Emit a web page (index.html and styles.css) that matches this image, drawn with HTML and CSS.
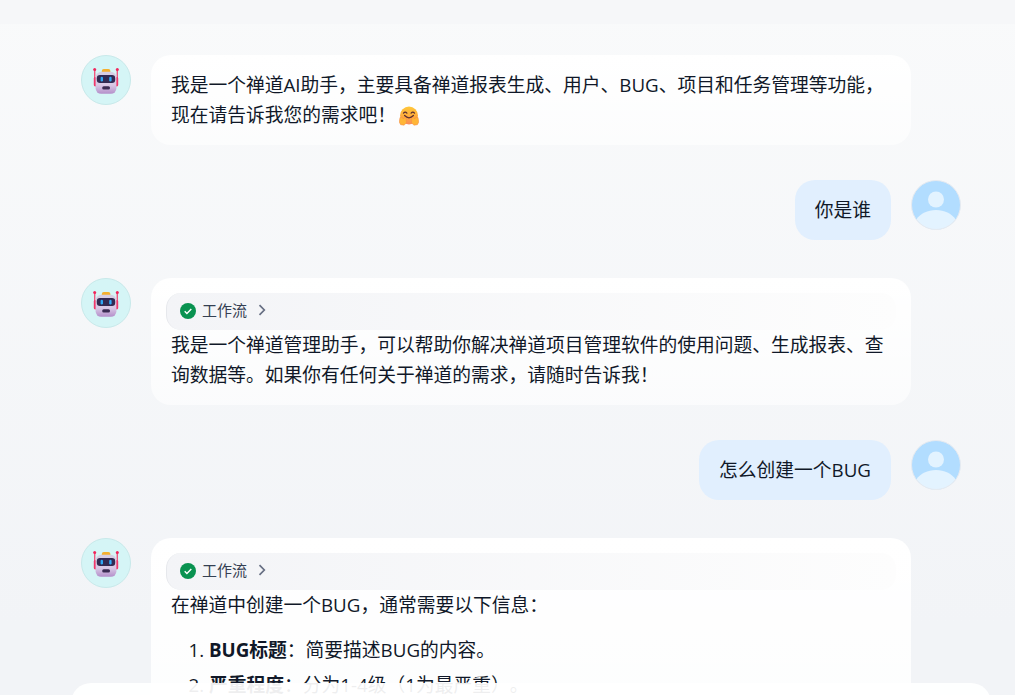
FILE: index.html
```html
<!DOCTYPE html>
<html lang="zh-CN">
<head>
    <meta charset="UTF-8">
    <meta name="viewport" content="width=device-width, initial-scale=1.0">
    <title>禅道AI助手</title>
    <link rel="stylesheet" href="styles.css">
</head>
<body>

    <!-- 公用图标 -->
    <svg class="sprite" width="0" height="0">
        <defs>
            <linearGradient id="face" x1="0" y1="0" x2="0" y2="1">
                <stop offset="0" stop-color="#d6cfe4"/>
                <stop offset="0.6" stop-color="#d9c9e6"/>
                <stop offset="1" stop-color="#b48fca"/>
            </linearGradient>
            <linearGradient id="hug" x1="0" y1="0" x2="0" y2="1">
                <stop offset="0" stop-color="#ffc83a"/>
                <stop offset="0.6" stop-color="#ffa83c"/>
                <stop offset="1" stop-color="#f98a5c"/>
            </linearGradient>
            <symbol id="robot" viewBox="0 0 28 28">
                <path d="M2.700 4v13M25.300 4v13" stroke="#f0577f" stroke-width="1.400"/>
                <circle cx="2.700" cy="3.400" r="1.500" fill="#f0265c"/>
                <circle cx="25.300" cy="3.400" r="1.500" fill="#f0265c"/>
                <rect x="1.800" y="11" width="3" height="9.500" rx="1.400" fill="#f0386b"/>
                <rect x="23.200" y="11" width="3" height="9.500" rx="1.400" fill="#f0386b"/>
                <rect x="9.800" y="3" width="8.600" height="5" rx="2" fill="#f5b02e"/>
                <rect x="3.600" y="5.800" width="20.800" height="22" rx="5.500" fill="url(#face)"/>
                <rect x="4.800" y="9" width="18.400" height="8" rx="3.200" fill="#322a52"/>
                <rect x="8.600" y="10.800" width="2.400" height="4.600" rx="1.200" fill="#2fa8f5"/>
                <rect x="17.200" y="10.800" width="2.400" height="4.600" rx="1.200" fill="#2fa8f5"/>
                <rect x="10.200" y="20.200" width="7.800" height="3.200" rx="1.500" fill="#3a2b52"/>
            </symbol>
            <symbol id="user" viewBox="0 0 50 50">
                <circle cx="25" cy="25" r="24.500" fill="#b2ddff"/>
                <circle cx="25" cy="19.500" r="8" fill="#e3f3ff"/>
                <path d="M5.300 39.500C9.500 33.400 16.600 30 25 30s15.500 3.400 19.700 9.500A24.500 24.500 0 0 1 25 49.500 24.500 24.500 0 0 1 5.300 39.500z" fill="#e3f3ff"/>
                <circle cx="25" cy="25" r="24.500" fill="none" stroke="#e6eaf0"/>
            </symbol>
            <symbol id="check" viewBox="0 0 16 16">
                <circle cx="8" cy="8" r="8" fill="#099250"/>
                <path d="M4.700 8.300l2.200 2.200 4.400-4.500" fill="none" stroke="#fff" stroke-width="1.400"/>
            </symbol>
            <symbol id="arrow" viewBox="0 0 10 12">
                <path d="M2.500 1.200L7.300 6l-4.800 4.800" fill="none" stroke="#676f83" stroke-width="1.700"/>
            </symbol>
        </defs>
    </svg>

    <div class="chat">
        <div class="message bot">
            <div class="avatar"><svg><use href="#robot"/></svg></div>
            <div class="bubble">
                <p>我是一个禅道AI助手，主要具备禅道报表生成、用户、BUG、项目和任务管理等功能，现在请告诉我您的需求吧！<svg class="emoji" viewBox="0 0 20 20">
                        <circle cx="10" cy="9.500" r="9" fill="url(#hug)"/>
                        <path d="M4.500 7.200q1.700-2.200 3.400 0M12.100 7.200q1.700-2.200 3.400 0M5.600 9.500q4.400 4.600 8.800 0" fill="none" stroke="#5a2e32" stroke-width="1.200" stroke-linecap="round"/>
                        <path d="M1 11.500l2-.5 1.300 2 1.500-1.600 1.400 1 .3 4.400-2.500 2.400-3.400-.5L.2 16zM19 11.500l-2-.5-1.300 2-1.500-1.600-1.400 1-.3 4.400 2.500 2.400 3.400-.5 1.400-2.700z" fill="#ffb637" stroke="#f4884c" stroke-width=".5"/>
                    </svg></p>
            </div>
        </div>

        <div class="message me">
            <div class="bubble"><p>你是谁</p></div>
            <svg class="user"><use href="#user"/></svg>
        </div>

        <div class="message bot">
            <div class="avatar"><svg><use href="#robot"/></svg></div>
            <div class="bubble">
                <div class="workflow">
                    <svg class="check"><use href="#check"/></svg>
                    <span>工作流</span>
                    <svg class="arrow"><use href="#arrow"/></svg>
                </div>
                <p>我是一个禅道管理助手，可以帮助你解决禅道项目管理软件的使用问题、生成报表、查询数据等。如果你有任何关于禅道的需求，请随时告诉我！</p>
            </div>
        </div>

        <div class="message me">
            <div class="bubble"><p>怎么创建一个BUG</p></div>
            <svg class="user"><use href="#user"/></svg>
        </div>

        <div class="message bot last">
            <div class="avatar"><svg><use href="#robot"/></svg></div>
            <div class="bubble">
                <div class="workflow">
                    <svg class="check"><use href="#check"/></svg>
                    <span>工作流</span>
                    <svg class="arrow"><use href="#arrow"/></svg>
                </div>
                <p>在禅道中创建一个BUG，通常需要以下信息：</p>
                <ol>
                    <li><strong>BUG标题</strong>：简要描述BUG的内容。</li>
                    <li><strong>严重程度</strong>：分为1-4级（1为最严重）。</li>
                </ol>
            </div>
        </div>
    </div>

    <div class="input-bar"></div>

</body>
</html>
```

FILE: styles.css
```css
* {
    box-sizing: border-box;
}

body {
    margin: 0;
    height: 100vh;
    overflow: hidden;
    position: relative;
    border-top: 24px solid #f6f7f9;
    background: linear-gradient(180deg, #f9fafb 0%, #f2f4f7 90%);
    color: #101828;
    font-family: "Open Sans", "Noto Sans CJK SC", sans-serif;
    font-size: 18.75px;
    line-height: 30px;
    text-spacing-trim: space-all;
}

.sprite {
    position: absolute;
}

.chat {
    width: 880px;
    height: 100%;
    margin-left: 81px;
    padding-top: 31px;
    display: flex;
    flex-direction: column;
}

.message {
    display: flex;
    flex: none;
    align-items: flex-start;
    gap: 20px;
}

.message.bot {
    margin-bottom: 35px;
}

.message.me {
    justify-content: flex-end;
    margin-bottom: 38px;
}

.message.last {
    margin-bottom: 0;
}

.avatar {
    display: flex;
    align-items: center;
    justify-content: center;
    flex: none;
    width: 50px;
    height: 50px;
    border: 1px solid #c8e9ea;
    border-radius: 50%;
    background: #d5f5f6;
}

.avatar svg {
    width: 28px;
    height: 28px;
}

.user {
    flex: none;
    width: 50px;
    height: 50px;
}

.bubble {
    padding: 15px 20px;
    border-radius: 20px;
}

.bot .bubble {
    width: 760px;
    background: linear-gradient(180deg, #fff, rgba(255, 255, 255, 0.6));
}

.me .bubble {
    background: #e1effe;
}

/* 最后一条回复延伸到输入框下面 */
.last .bubble {
    padding-bottom: 0;
    border-radius: 20px 20px 0 0;
    background: linear-gradient(180deg, #fff, rgba(255, 255, 255, 0.85));
}

p {
    margin: 0;
}

.emoji {
    width: 20px;
    height: 20px;
    margin-left: 3px;
    vertical-align: -4px;
}

.workflow {
    display: flex;
    align-items: center;
    height: 37px;
    margin: 0 -5px;
    padding: 0 0 3px 13px;
    border-left: 1px solid #e6e8ec;
    border-radius: 15px;
    background: linear-gradient(90deg, #f3f4f7, #fdfdfd);
    color: #354052;
    font-size: 15px;
}

.check {
    width: 16px;
    height: 16px;
    margin: 2px 6px 0 0;
}

.arrow {
    width: 10px;
    height: 12px;
    margin-left: 10px;
}

ol {
    margin: 15px 0 0;
    padding-left: 38px;
}

li {
    margin-bottom: 5px;
}

li:last-child {
    margin-bottom: 0;
}

.input-bar {
    position: absolute;
    left: 71px;
    bottom: -28px;
    width: 920px;
    height: 40px;
    border-radius: 20px 20px 0 0;
    background: rgba(255, 255, 255, 0.93);
}
```
